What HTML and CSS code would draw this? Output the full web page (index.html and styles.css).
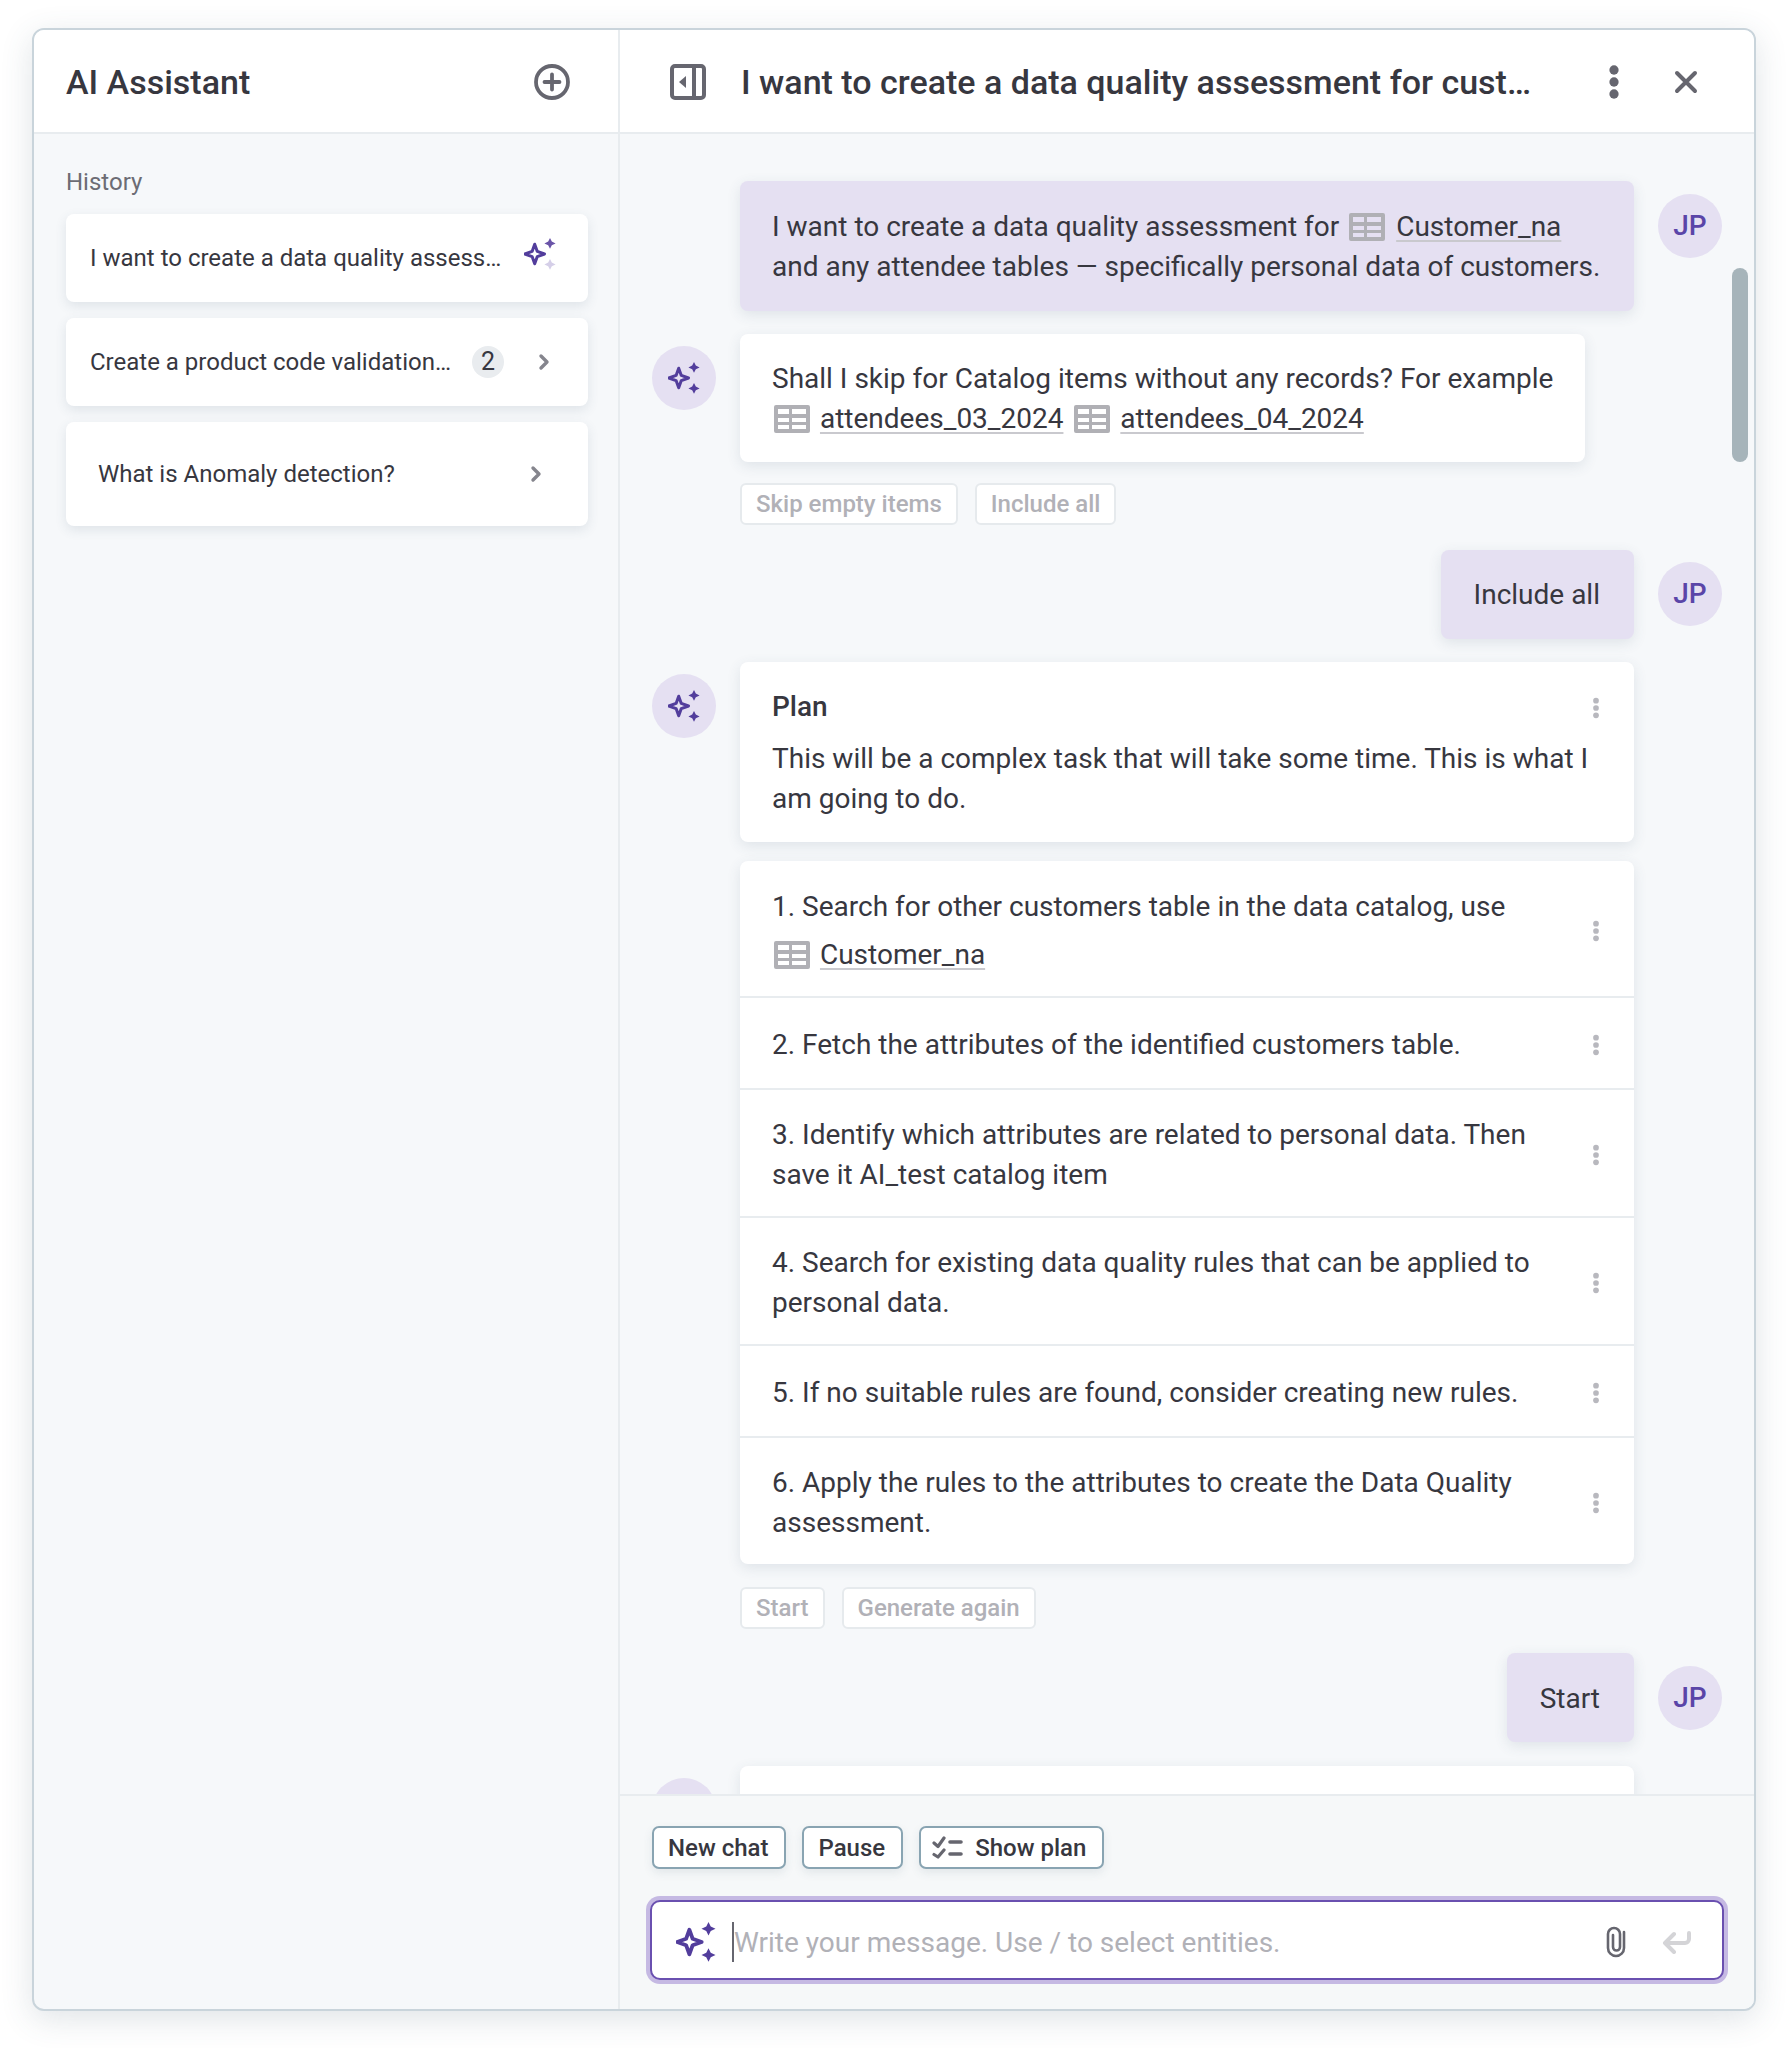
FILE: index.html
```html
<!DOCTYPE html>
<html lang="en">
<head>
    <meta charset="UTF-8">
    <meta name="viewport" content="width=device-width, initial-scale=1.0">
    <title>AI Assistant</title>
    <link rel="stylesheet" href="styles.css">
</head>
<body>

    <!-- Shared icons -->
    <svg class="sprite" width="0" height="0">
        <symbol id="spark" viewBox="0 0 32 32">
            <path d="M10.7 6.2 13.3 13.4 20.5 16 13.3 18.6 10.7 25.8 8.1 18.6 .9 16 8.1 13.4Z" fill="none" stroke="#523d9c" stroke-width="3" stroke-linejoin="round"/>
            <path d="M26 0 27.8 3.6 31.6 5.4 27.8 7.2 26 10.8 24.2 7.2 20.4 5.4 24.2 3.6Z" fill="#523d9c"/>
            <path d="M26 21 27.8 24.6 31.6 26.4 27.8 28.2 26 31.8 24.2 28.2 20.4 26.4 24.2 24.6Z" fill="#523d9c"/>
        </symbol>
        <symbol id="table" viewBox="0 0 36 28">
            <path fill-rule="evenodd" d="M2 0H34A2 2 0 0 1 36 2V26A2 2 0 0 1 34 28H2A2 2 0 0 1 0 26V2A2 2 0 0 1 2 0ZM4 4V9H15V4ZM18 4V9H32V4ZM4 13V17H15V13ZM18 13V17H32V13ZM4 20V24H15V20ZM18 20V24H32V20Z" fill="#b0b0b5"/>
        </symbol>
        <symbol id="chevron" viewBox="0 0 12 18">
            <path d="M3 3 9 9 3 15" fill="none" stroke="#85858d" stroke-width="3.4" stroke-linecap="round" stroke-linejoin="round"/>
        </symbol>
        <symbol id="dots" viewBox="0 0 8 24">
            <circle cx="4" cy="4" r="3.1"/>
            <circle cx="4" cy="12" r="3.1"/>
            <circle cx="4" cy="20" r="3.1"/>
        </symbol>
    </svg>

    <div class="panel">

        <!-- History sidebar -->
        <div class="sidebar">
            <div class="header">
                <h1 class="header-title">AI Assistant</h1>
                <svg class="icon-plus" viewBox="0 0 36 36">
                    <circle cx="18" cy="18" r="16" fill="none" stroke="#66666f" stroke-width="3.8"/>
                    <path d="M18 10.500V25.500M10.500 18H25.500" stroke="#66666f" stroke-width="3.8" stroke-linecap="round"/>
                </svg>
            </div>
            <div class="history">
                <h2 class="history-label">History</h2>
                <a class="history-item history-active" href="#">
                    <span class="history-text">I want to create a data quality assess…</span>
                    <svg class="history-spark" viewBox="0 0 32 32">
                        <path d="M10.7 6.2 13.3 13.4 20.5 16 13.3 18.6 10.7 25.8 8.1 18.6 .9 16 8.1 13.4Z" fill="none" stroke="#523d9c" stroke-width="3" stroke-linejoin="round"/>
                        <path d="M26 0 27.8 3.6 31.6 5.4 27.8 7.2 26 10.8 24.2 7.2 20.4 5.4 24.2 3.6Z" fill="#6a54a8"/>
                        <path d="M26 21 27.8 24.6 31.6 26.4 27.8 28.2 26 31.8 24.2 28.2 20.4 26.4 24.2 24.6Z" fill="#d5cfe8"/>
                    </svg>
                </a>
                <a class="history-item" href="#">
                    <span class="history-text">Create a product code validation…</span>
                    <span class="badge">2</span>
                    <svg class="chevron"><use href="#chevron"/></svg>
                </a>
                <a class="history-item history-tall" href="#">
                    <span class="history-text">What is Anomaly detection?</span>
                    <svg class="chevron"><use href="#chevron"/></svg>
                </a>
            </div>
        </div>

        <!-- Conversation -->
        <div class="main">
            <div class="header header-main">
                <svg class="icon-collapse" viewBox="0 0 36 36">
                    <rect x="2" y="2" width="32" height="32" rx="3" fill="none" stroke="#66666f" stroke-width="4"/>
                    <path d="M24 2V34" stroke="#66666f" stroke-width="4"/>
                    <path d="M16 12V24L9 18Z" fill="#66666f"/>
                </svg>
                <h1 class="header-title chat-title">I want to create a data quality assessment for cust…</h1>
                <svg class="icon-kebab"><use href="#dots"/></svg>
                <svg class="icon-close" viewBox="0 0 24 24">
                    <path d="M3 3 21 21M21 3 3 21" stroke="#66666f" stroke-width="4" stroke-linecap="round"/>
                </svg>
            </div>

            <div class="chat">
                <div class="row row-first">
                    <div class="bubble bubble-user bubble-wide">
                        I want to create a data quality assessment for
                        <svg class="table-icon"><use href="#table"/></svg>
                        <a class="entity" href="#">Customer_na</a>
                        and any attendee tables — specifically personal data of customers.
                    </div>
                    <div class="avatar">JP</div>
                </div>

                <div class="row row-bot">
                    <div class="avatar avatar-bot"><svg class="spark"><use href="#spark"/></svg></div>
                    <div class="bubble bubble-question">
                        Shall I skip for Catalog items without any records? For example<br>
                        <svg class="table-icon"><use href="#table"/></svg>
                        <a class="entity" href="#">attendees_03_2024</a>
                        <svg class="table-icon"><use href="#table"/></svg>
                        <a class="entity" href="#">attendees_04_2024</a>
                    </div>
                </div>
                <div class="chips chips-first">
                    <span class="chip">Skip empty items</span>
                    <span class="chip">Include all</span>
                </div>

                <div class="row row-user-short">
                    <div class="bubble bubble-user bubble-short">Include all</div>
                    <div class="avatar">JP</div>
                </div>

                <div class="row row-plan">
                    <div class="avatar avatar-bot"><svg class="spark"><use href="#spark"/></svg></div>
                    <div class="bubble bubble-wide plan-intro">
                        <svg class="kebab-small kebab-corner"><use href="#dots"/></svg>
                        <div class="plan-title">Plan</div>
                        This will be a complex task that will take some time. This is what I am going to do.
                    </div>
                </div>

                <ol class="plan-list">
                    <li class="plan-step plan-step-entity">
                        <div class="plan-text">1. Search for other customers table in the data catalog, use<br>
                            <svg class="table-icon"><use href="#table"/></svg>
                            <a class="entity" href="#">Customer_na</a>
                        </div>
                        <svg class="kebab-small"><use href="#dots"/></svg>
                    </li>
                    <li class="plan-step">
                        <div class="plan-text">2. Fetch the attributes of the identified customers table.</div>
                        <svg class="kebab-small"><use href="#dots"/></svg>
                    </li>
                    <li class="plan-step">
                        <div class="plan-text">3. Identify which attributes are related to personal data. Then save it AI_test catalog item</div>
                        <svg class="kebab-small"><use href="#dots"/></svg>
                    </li>
                    <li class="plan-step">
                        <div class="plan-text">4. Search for existing data quality rules that can be applied to personal data.</div>
                        <svg class="kebab-small"><use href="#dots"/></svg>
                    </li>
                    <li class="plan-step">
                        <div class="plan-text">5. If no suitable rules are found, consider creating new rules.</div>
                        <svg class="kebab-small"><use href="#dots"/></svg>
                    </li>
                    <li class="plan-step">
                        <div class="plan-text">6. Apply the rules to the attributes to create the Data Quality assessment.</div>
                        <svg class="kebab-small"><use href="#dots"/></svg>
                    </li>
                </ol>
                <div class="chips chips-plan">
                    <span class="chip">Start</span>
                    <span class="chip">Generate again</span>
                </div>

                <div class="row row-start">
                    <div class="bubble bubble-user bubble-short">Start</div>
                    <div class="avatar">JP</div>
                </div>

                <div class="row row-next">
                    <div class="avatar avatar-bot"></div>
                    <div class="bubble bubble-wide bubble-next"></div>
                </div>

                <div class="scrollbar"></div>
            </div>

            <!-- Actions and input -->
            <div class="composer">
                <div class="actions">
                    <button class="action">New chat</button>
                    <button class="action">Pause</button>
                    <button class="action action-plan">
                        <svg class="icon-plan" viewBox="0 0 31 23">
                            <path d="M2 7 6 10.500 12 2M2 18.500 6 21 12 14" fill="none" stroke="#66666f" stroke-width="3.2" stroke-linecap="round" stroke-linejoin="round"/>
                            <path d="M18 6H29M18 18H29" stroke="#66666f" stroke-width="3.6" stroke-linecap="round"/>
                        </svg>
                        Show plan
                    </button>
                </div>
                <div class="input-box">
                    <svg class="input-spark"><use href="#spark"/></svg>
                    <span class="caret"></span>
                    <span class="placeholder">Write your message. Use / to select entities.</span>
                    <svg class="icon-clip" viewBox="0 0 20 32">
                        <path d="M18 6V22A8 8 0 0 1 2 22V8A6 6 0 0 1 14 8V21A3.500 3.500 0 0 1 7 21V9" fill="none" stroke="#66666f" stroke-width="2.6" stroke-linecap="round"/>
                    </svg>
                    <svg class="icon-return" viewBox="0 0 29 23">
                        <path d="M27 2V8A4 4 0 0 1 23 12H4M12 3 3 12 12 21" fill="none" stroke="#d4d4d7" stroke-width="4" stroke-linecap="round" stroke-linejoin="round"/>
                    </svg>
                </div>
            </div>
        </div>
    </div>

</body>
</html>
```

FILE: styles.css
```css
* {
    margin: 0;
    padding: 0;
    box-sizing: border-box;
}
body {
    width: 1788px;
    height: 2048px;
    padding: 28px 32px 0;
    overflow: hidden;
    background: #fff;
    color: #37373f;
    font-family: Roboto, Arial, sans-serif;
    font-size: 28px;
    line-height: 40px;
}
a {
    color: inherit;
    text-decoration: none;
}
.sprite {
    position: absolute;
}
.panel {
    display: flex;
    width: 1724px;
    height: 1983px;
    background: #f6f8fa;
    border: 2px solid #c9d4db;
    border-radius: 12px;
    box-shadow: 0 8px 32px rgba(60, 85, 105, 0.16);
    overflow: hidden;
}

/* Header bars */
.header {
    display: flex;
    align-items: center;
    justify-content: space-between;
    flex: none;
    height: 104px;
    padding: 2px 48px 0 32px;
    background: #fff;
    border-bottom: 2px solid #e8ecef;
}
.header-title {
    font-size: 34px;
    font-weight: 500;
    line-height: 48px;
}
.icon-plus {
    width: 36px;
    height: 36px;
}

/* Sidebar */
.sidebar {
    flex: none;
    width: 586px;
    border-right: 2px solid #e8ecef;
}
.history {
    display: flex;
    flex-direction: column;
    gap: 16px;
    padding: 31px 30px 32px 32px;
}
.history-label {
    margin-bottom: -1px;
    font-size: 24px;
    font-weight: 400;
    line-height: 34px;
    color: #6c6c74;
}
.history-item {
    display: flex;
    align-items: center;
    height: 88px;
    padding: 0 38px 0 24px;
    background: #fff;
    border-radius: 8px;
    box-shadow: 0 4px 12px rgba(60, 85, 105, 0.12);
    font-size: 24px;
}
.history-text {
    flex: 1;
    white-space: nowrap;
}
.history-active {
    padding-right: 32px;
}
.history-spark {
    width: 32px;
    height: 32px;
    margin-top: -8px;
}
.history-tall {
    height: 104px;
    padding: 0 46px 0 32px;
}
.badge {
    width: 32px;
    height: 32px;
    margin-right: 34px;
    background: #e9ecef;
    border-radius: 50%;
    font-size: 25px;
    line-height: 32px;
    text-align: center;
}
.chevron {
    width: 12px;
    height: 18px;
}

/* Conversation */
.main {
    display: flex;
    flex-direction: column;
    flex: 1;
    min-width: 0;
}
.header-main {
    padding: 2px 56px 0 50px;
    justify-content: flex-start;
}
.icon-collapse {
    flex: none;
    width: 36px;
    height: 36px;
    margin-right: 35px;
}
.chat-title {
    flex: 1;
    white-space: nowrap;
}
.icon-kebab {
    width: 12px;
    height: 36px;
    margin-right: 54px;
    fill: #66666f;
}
.icon-close {
    width: 24px;
    height: 24px;
}
.chat {
    position: relative;
    flex: 1;
    min-height: 0;
    padding: 47px 32px 0;
    overflow: hidden;
}
.row {
    display: flex;
    gap: 24px;
    justify-content: flex-end;
}
.row-bot,
.row-plan,
.row-next {
    justify-content: flex-start;
    padding-right: 88px;
}
.row-bot {
    margin-top: 23px;
}
.row-user-short {
    margin-top: 25px;
}
.row-plan {
    margin-top: 23px;
}
.row-start {
    margin-top: 24px;
}
.row-next {
    margin-top: 24px;
}
.avatar {
    flex: none;
    width: 64px;
    height: 64px;
    margin-top: 12px;
    background: #e5e0f2;
    border-radius: 50%;
    color: #5a45a8;
    font-size: 28px;
    font-weight: 500;
    line-height: 64px;
    text-align: center;
}
.row-first .avatar,
.row-start .avatar {
    margin-top: 13px;
}
.avatar-bot {
    display: flex;
    align-items: center;
    justify-content: center;
}
.spark {
    width: 32px;
    height: 32px;
}
.bubble {
    position: relative;
    padding: 25px 32px 24px;
    background: #fff;
    border-radius: 8px;
    box-shadow: 0 4px 14px rgba(60, 85, 105, 0.12);
}
.bubble-user {
    background: #e5e0f2;
}
.bubble-wide {
    width: 894px;
}
.row-first .bubble {
    padding-top: 26px;
}
.bubble-question {
    padding-bottom: 23px;
}
.bubble-short {
    padding: 25px 34px 24px 33px;
}
.row-start .bubble {
    padding-top: 26px;
    padding-bottom: 23px;
}
.bubble-next {
    height: 120px;
}
.plan-intro {
    padding-bottom: 23px;
}
.plan-title {
    margin-bottom: 12px;
    font-weight: 500;
}
.table-icon {
    width: 36px;
    height: 28px;
    margin: 0 3px 0 2px;
    vertical-align: -5px;
}
.entity + .table-icon {
    margin: 0 3px 0 4px;
}
.bubble-user .table-icon {
    margin: 0 4px 0 3px;
}
.entity {
    text-decoration: underline;
    text-decoration-color: #c9c9ce;
    text-decoration-thickness: 2px;
    text-underline-offset: 4px;
}

/* Quick reply chips */
.chips {
    display: flex;
    gap: 17px;
    margin-left: 88px;
}
.chips-first {
    margin-top: 21px;
}
.chips-plan {
    margin-top: 23px;
}
.chip {
    height: 42px;
    padding: 0 14px;
    background: #fff;
    border: 2px solid #e6eaed;
    border-radius: 6px;
    color: #b1b1b7;
    font-size: 24px;
    font-weight: 500;
    line-height: 38px;
}

/* Plan steps */
.plan-list {
    width: 894px;
    margin: 19px 0 0 88px;
    list-style: none;
    background: #fff;
    border-radius: 8px;
    box-shadow: 0 4px 14px rgba(60, 85, 105, 0.12);
}
.plan-step {
    display: flex;
    align-items: center;
    min-height: 92px;
    padding: 25px 32px 21px;
    border-top: 2px solid #e8ecef;
}
.plan-step:first-child {
    border-top: 0;
}
.plan-step-entity {
    padding: 22px 32px 17px;
    line-height: 48px;
}
.plan-text {
    flex: 1;
    padding-right: 40px;
}
.kebab-small {
    flex: none;
    width: 8px;
    height: 22px;
    margin-right: 2px;
    fill: #b8b8be;
}
.kebab-corner {
    position: absolute;
    top: 35px;
    right: 34px;
    margin: 0;
}
.scrollbar {
    position: absolute;
    top: 134px;
    right: 6px;
    width: 16px;
    height: 194px;
    background: #a6b4ba;
    border-radius: 8px;
}

/* Composer */
.composer {
    flex: none;
    height: 215px;
    padding: 30px 30px 0;
    background: #f6f8f9;
    border-top: 2px solid #e8ecef;
}
.actions {
    display: flex;
    gap: 16px;
    margin: 0 2px;
}
.action {
    display: flex;
    align-items: center;
    height: 43px;
    padding: 0 16px 0 14px;
    background: #fff;
    border: 2px solid #89a4b2;
    border-radius: 7px;
    box-shadow: 0 4px 10px rgba(60, 85, 105, 0.1);
    color: #37373f;
    font-family: inherit;
    font-size: 24px;
    font-weight: 500;
}
.action-plan {
    padding-left: 11px;
}
.icon-plan {
    width: 31px;
    height: 23px;
    margin-right: 12px;
}
.input-box {
    display: flex;
    align-items: center;
    height: 80px;
    margin-top: 31px;
    padding: 4px 31px 0 24px;
    background: #fff;
    border: 2px solid #6a50b0;
    border-radius: 10px;
    box-shadow: 0 0 0 4px #c5b9e3;
}
.input-spark {
    width: 40px;
    height: 40px;
    margin-right: 16px;
}
.caret {
    width: 2px;
    height: 40px;
    background: #66666f;
}
.placeholder {
    flex: 1;
    margin-top: 2px;
    color: #b1b1b7;
}
.icon-clip {
    width: 20px;
    height: 32px;
    margin-right: 36px;
}
.icon-return {
    width: 29px;
    height: 23px;
}
```
